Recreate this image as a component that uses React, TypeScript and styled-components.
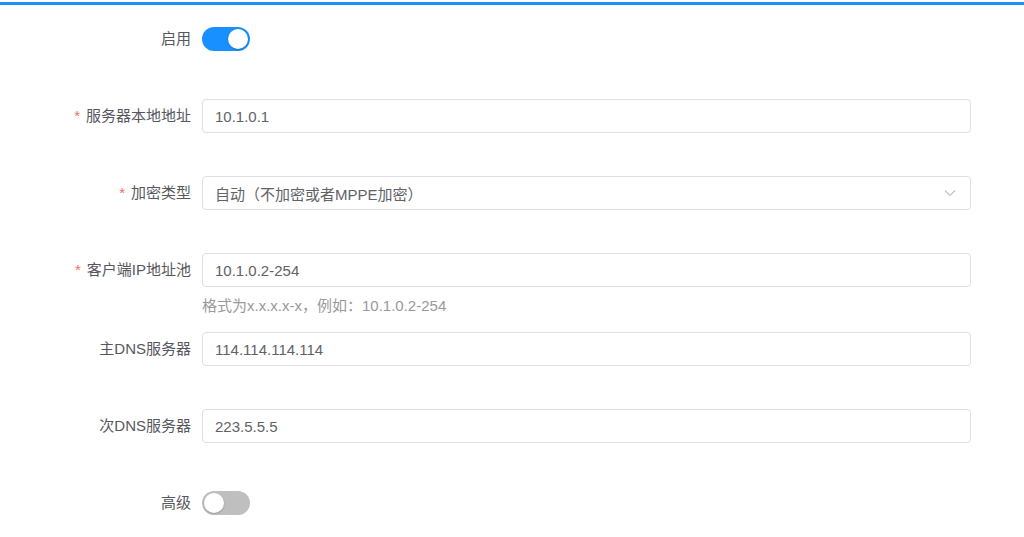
import React from 'react';
import styled, { createGlobalStyle } from 'styled-components';

const GlobalStyle = createGlobalStyle`
  html, body {
    margin: 0;
    padding: 0;
    background: #ffffff;
  }
  body {
    font-family: "Liberation Sans", "Noto Sans CJK SC", sans-serif;
    font-size: 15px;
    color: #606266;
  }
`;

const Page = styled.div`
  padding-top: 2px;
  background: #ffffff;
`;

const TopBar = styled.div`
  height: 3px;
  background-color: #1890ff;
`;

const Form = styled.form`
  padding: 17px 53px 0 0;
`;

const FormItem = styled.div<{ $hasHint?: boolean }>`
  display: grid;
  grid-template-columns: 202px 1fr;
  margin-bottom: ${(p) => (p.$hasHint ? '0' : '43px')};
`;

const Label = styled.label`
  height: 34px;
  line-height: 34px;
  text-align: right;
  padding-right: 11px;
  box-sizing: border-box;
  color: #55585e;
  white-space: nowrap;
`;

const Required = styled.span`
  color: #f56c6c;
  margin-right: 6px;
`;

const Control = styled.div`
  display: flex;
  flex-direction: column;
  min-height: 34px;
  justify-content: center;
`;

const InputBox = styled.div`
  height: 34px;
  box-sizing: border-box;
  border: 1px solid #dcdfe6;
  border-radius: 4px;
  display: flex;
  align-items: center;
  padding: 0 12px;
  color: #606266;
  background: #ffffff;
`;

const InputText = styled.input`
  border: none;
  outline: none;
  flex: 1;
  padding: 0;
  font: inherit;
  color: inherit;
  background: transparent;
`;

const SelectArrow = styled.svg`
  width: 12px;
  height: 12px;
  margin-right: 2px;
  flex-shrink: 0;
`;

const Hint = styled.div`
  height: 45px;
  box-sizing: border-box;
  padding-top: 9px;
  line-height: 20px;
  color: #999999;
`;

const Switch = styled.span<{ $on?: boolean }>`
  position: relative;
  display: inline-block;
  width: 48px;
  height: 24px;
  border-radius: 12px;
  background-color: ${(p) => (p.$on ? '#1890ff' : '#bfbfbf')};

  &::after {
    content: '';
    position: absolute;
    top: 2px;
    left: ${(p) => (p.$on ? '26px' : '2px')};
    width: 20px;
    height: 20px;
    border-radius: 50%;
    background: #ffffff;
    box-shadow: 0 1px 2px rgba(0, 0, 0, 0.2);
  }
`;

const SwitchRow = styled.div`
  height: 34px;
  display: flex;
  align-items: center;
`;

const App: React.FC = () => {
  return (
    <Page>
      <GlobalStyle />
      <TopBar />
      <Form onSubmit={(e) => e.preventDefault()}>
        <FormItem>
          <Label>启用</Label>
          <SwitchRow>
            <Switch $on />
          </SwitchRow>
        </FormItem>

        <FormItem>
          <Label>
            <Required>*</Required>服务器本地地址
          </Label>
          <Control>
            <InputBox>
              <InputText defaultValue="10.1.0.1" />
            </InputBox>
          </Control>
        </FormItem>

        <FormItem>
          <Label>
            <Required>*</Required>加密类型
          </Label>
          <Control>
            <InputBox>
              <InputText readOnly defaultValue="自动（不加密或者MPPE加密）" />
              <SelectArrow viewBox="0 0 12 12">
                <polyline points="1,3.5 6,8.5 11,3.5" fill="none" stroke="#c0c4cc" strokeWidth="1.2" />
              </SelectArrow>
            </InputBox>
          </Control>
        </FormItem>

        <FormItem $hasHint>
          <Label>
            <Required>*</Required>客户端IP地址池
          </Label>
          <Control>
            <InputBox>
              <InputText defaultValue="10.1.0.2-254" />
            </InputBox>
            <Hint>格式为x.x.x.x-x，例如：10.1.0.2-254</Hint>
          </Control>
        </FormItem>

        <FormItem>
          <Label>主DNS服务器</Label>
          <Control>
            <InputBox>
              <InputText defaultValue="114.114.114.114" />
            </InputBox>
          </Control>
        </FormItem>

        <FormItem>
          <Label>次DNS服务器</Label>
          <Control>
            <InputBox>
              <InputText defaultValue="223.5.5.5" />
            </InputBox>
          </Control>
        </FormItem>

        <FormItem>
          <Label>高级</Label>
          <SwitchRow>
            <Switch />
          </SwitchRow>
        </FormItem>
      </Form>
    </Page>
  );
};

export default App;
